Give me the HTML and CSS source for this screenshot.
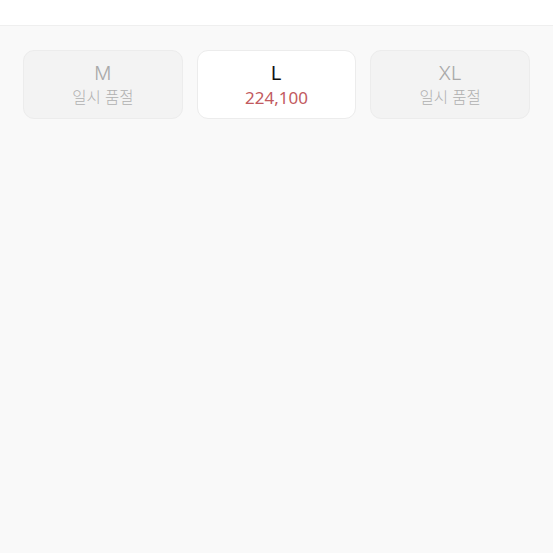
FILE: index.html
```html
<!DOCTYPE html>
<html lang="ko">
<head>
<meta charset="utf-8">
<link rel="stylesheet" href="styles.css">
</head>
<body>
<div class="header"></div>
<div class="options">
  <div class="opt disabled">
    <div class="size">M</div>
    <div class="sub">일시 품절</div>
  </div>
  <div class="opt active">
    <div class="size">L</div>
    <div class="price">224,100</div>
  </div>
  <div class="opt disabled">
    <div class="size">XL</div>
    <div class="sub">일시 품절</div>
  </div>
</div>
</body>
</html>
```
FILE: styles.css
```css
html, body {
  margin: 0;
  padding: 0;
  height: 100%;
  background: #f9f9f9;
  font-family: "Inter", "Noto Sans CJK KR", sans-serif;
}
.header {
  height: 25px;
  background: #ffffff;
  border-bottom: 1px solid #efefef;
}
.options {
  display: grid;
  grid-template-columns: repeat(3, 1fr);
  gap: 14px;
  padding: 24px 23px 0 23px;
}
.opt {
  height: 69px;
  box-sizing: border-box;
  border-radius: 11px;
  display: flex;
  flex-direction: column;
  align-items: center;
  justify-content: center;
  gap: 3px;
  padding-top: 2px;
}
.opt.disabled {
  background: #f3f3f3;
  border: 1px solid #ececec;
}
.opt.active {
  background: #ffffff;
  border: 1px solid #ececec;
}
.size {
  font-size: 19px;
  line-height: 22px;
  font-weight: 300;
}
.disabled .size { color: #a9a9a9; }
.active .size { color: #111; font-weight: 400; }
.sub {
  font-size: 15.5px;
  line-height: 20px;
  color: #b0b0b0;
  font-weight: 300;
}
.price {
  font-family: "Noto Sans", "Noto Sans CJK KR", sans-serif;
  font-size: 17px;
  line-height: 20px;
  color: #c25a60;
}
```
